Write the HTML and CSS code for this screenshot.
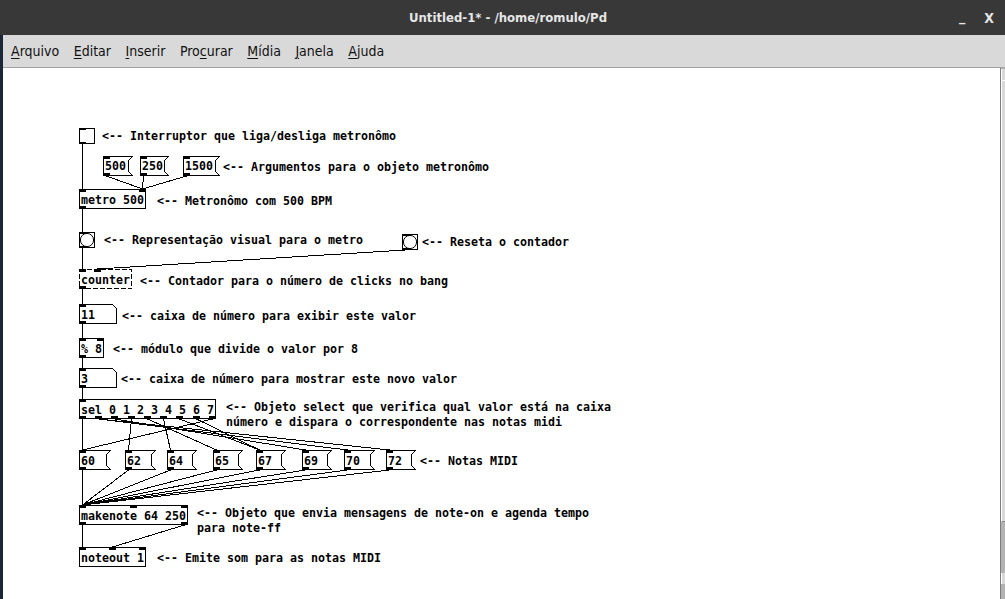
FILE: index.html
```html
<!DOCTYPE html>
<html lang="pt">
<head>
<meta charset="utf-8">
<title>Untitled-1* - /home/romulo/Pd</title>
<link rel="stylesheet" href="styles.css">
</head>
<body>
<div class="screen">
  <header class="titlebar">
    <div class="title">Untitled-1* - /home/romulo/Pd</div>
    <div class="controls"><span class="min">_</span><span class="close">X</span></div>
  </header>
  <div class="main">
    <div class="strip"></div>
    <div class="window">
      <nav class="menubar">
        <span class="mi"><u>A</u>rquivo</span>
        <span class="mi"><u>E</u>ditar</span>
        <span class="mi"><u>I</u>nserir</span>
        <span class="mi">Pro<u>c</u>urar</span>
        <span class="mi"><u>M</u>ídia</span>
        <span class="mi"><u>J</u>anela</span>
        <span class="mi"><u>A</u>juda</span>
      </nav>
      <div class="workspace">
        <div class="canvas">
          <svg class="patch" width="997" height="531" viewBox="3 68 997 531" xmlns="http://www.w3.org/2000/svg">
            <g class="cords">
              <line x1="82.5" y1="144" x2="82.5" y2="189"/>
              <line x1="106.5" y1="176" x2="142.5" y2="189"/>
              <line x1="143.5" y1="176" x2="142.5" y2="189"/>
              <line x1="186.5" y1="176" x2="142.5" y2="189"/>
              <line x1="82.5" y1="209" x2="82.5" y2="232"/>
              <line x1="82.5" y1="248" x2="82.5" y2="269"/>
              <line x1="405.5" y1="250" x2="97.5" y2="269"/>
              <line x1="82.5" y1="289" x2="82.5" y2="304"/>
              <line x1="82.5" y1="324" x2="82.5" y2="338"/>
              <line x1="82.5" y1="358" x2="82.5" y2="368"/>
              <line x1="82.5" y1="388" x2="82.5" y2="399"/>
              <line x1="82.5" y1="419" x2="82.5" y2="450"/>
              <line x1="98.5" y1="419" x2="347.5" y2="450"/>
              <line x1="98.5" y1="419" x2="389.5" y2="450"/>
              <line x1="114.5" y1="419" x2="305.5" y2="450"/>
              <line x1="131.5" y1="419" x2="128.5" y2="450"/>
              <line x1="147.5" y1="419" x2="216.5" y2="450"/>
              <line x1="163.5" y1="419" x2="170.5" y2="450"/>
              <line x1="179.5" y1="419" x2="259.5" y2="450"/>
              <line x1="196.5" y1="419" x2="259.5" y2="450"/>
              <line x1="212.5" y1="419" x2="82.5" y2="450"/>
              <line x1="82.5" y1="470" x2="82.5" y2="505"/>
              <line x1="128.5" y1="470" x2="82.5" y2="505"/>
              <line x1="170.5" y1="470" x2="82.5" y2="505"/>
              <line x1="216.5" y1="470" x2="82.5" y2="505"/>
              <line x1="259.5" y1="470" x2="82.5" y2="505"/>
              <line x1="305.5" y1="470" x2="82.5" y2="505"/>
              <line x1="347.5" y1="470" x2="82.5" y2="505"/>
              <line x1="389.5" y1="470" x2="82.5" y2="505"/>
              <line x1="82.5" y1="525" x2="82.5" y2="547"/>
              <line x1="184.5" y1="525" x2="112.5" y2="547"/>
            </g>

            <rect class="b" x="79.5" y="128.5" width="15" height="15"/>
            <rect class="io" x="79" y="128" width="7" height="2"/>
            <rect class="io" x="79" y="142" width="7" height="2"/>
            <text class="t" x="102" y="139.5">&lt;-- Interruptor que liga/desliga metronômo</text>

            <polygon class="b" points="103.5,156.5 132.5,156.5 128.5,160.5 128.5,171.5 132.5,175.5 103.5,175.5"/>
            <rect class="io" x="103" y="156" width="7" height="3"/>
            <rect class="io" x="103" y="173" width="7" height="3"/>
            <text class="t" x="105" y="170">500</text>

            <polygon class="b" points="140.5,156.5 168.5,156.5 164.5,160.5 164.5,171.5 168.5,175.5 140.5,175.5"/>
            <rect class="io" x="140" y="156" width="7" height="3"/>
            <rect class="io" x="140" y="173" width="7" height="3"/>
            <text class="t" x="142" y="170">250</text>

            <polygon class="b" points="183.5,156.5 219.5,156.5 215.5,160.5 215.5,171.5 219.5,175.5 183.5,175.5"/>
            <rect class="io" x="183" y="156" width="7" height="3"/>
            <rect class="io" x="183" y="173" width="7" height="3"/>
            <text class="t" x="185" y="170">1500</text>
            <text class="t" x="223" y="170.5">&lt;-- Argumentos para o objeto metronômo</text>

            <rect class="b" x="79.5" y="189.5" width="66" height="19"/>
            <rect class="io" x="79" y="189" width="7" height="3"/>
            <rect class="io" x="139" y="189" width="7" height="3"/>
            <rect class="io" x="79" y="206" width="7" height="3"/>
            <text class="t" x="81" y="204">metro 500</text>
            <text class="t" x="157" y="204.5">&lt;-- Metronômo com 500 BPM</text>

            <rect class="b" x="79.5" y="232.5" width="15" height="15"/>
            <circle class="b" cx="87" cy="240" r="6.6"/>
            <rect class="io" x="79" y="232" width="7" height="2"/>
            <rect class="io" x="79" y="246" width="7" height="2"/>
            <text class="t" x="104" y="243.5">&lt;-- Representação visual para o metro</text>

            <rect class="b" x="402.5" y="234.5" width="15" height="15"/>
            <circle class="b" cx="410" cy="242" r="6.6"/>
            <rect class="io" x="402" y="234" width="7" height="2"/>
            <rect class="io" x="402" y="248" width="7" height="2"/>
            <text class="t" x="422" y="245.5">&lt;-- Reseta o contador</text>

            <rect class="b dash" x="79.5" y="269.5" width="52" height="19"/>
            <rect class="io" x="79" y="269" width="7" height="3"/>
            <rect class="io" x="94" y="269" width="7" height="3"/>
            <rect class="io" x="79" y="286" width="7" height="3"/>
            <text class="t" x="81" y="284">counter</text>
            <text class="t" x="140" y="284.5">&lt;-- Contador para o número de clicks no bang</text>

            <polygon class="b" points="79.5,304.5 112.5,304.5 116.5,308.5 116.5,323.5 79.5,323.5"/>
            <rect class="io" x="79" y="304" width="7" height="3"/>
            <rect class="io" x="79" y="321" width="7" height="3"/>
            <text class="t" x="81" y="318.5">11</text>
            <text class="t" x="122" y="319.5">&lt;-- caixa de número para exibir este valor</text>

            <rect class="b" x="79.5" y="338.5" width="24" height="19"/>
            <rect class="io" x="79" y="338" width="7" height="3"/>
            <rect class="io" x="97" y="338" width="7" height="3"/>
            <rect class="io" x="79" y="355" width="7" height="3"/>
            <text class="t" x="81" y="352.5">% 8</text>
            <text class="t" x="113" y="352.5">&lt;-- módulo que divide o valor por 8</text>

            <polygon class="b" points="79.5,368.5 112.5,368.5 116.5,372.5 116.5,387.5 79.5,387.5"/>
            <rect class="io" x="79" y="368" width="7" height="3"/>
            <rect class="io" x="79" y="385" width="7" height="3"/>
            <text class="t" x="81" y="382.5">3</text>
            <text class="t" x="121" y="383">&lt;-- caixa de número para mostrar este novo valor</text>

            <rect class="b" x="79.5" y="399.5" width="136" height="19"/>
            <rect class="io" x="79" y="399" width="7" height="3"/>
            <rect class="io" x="79" y="416" width="7" height="3"/>
            <rect class="io" x="95" y="416" width="7" height="3"/>
            <rect class="io" x="111" y="416" width="7" height="3"/>
            <rect class="io" x="128" y="416" width="7" height="3"/>
            <rect class="io" x="144" y="416" width="7" height="3"/>
            <rect class="io" x="160" y="416" width="7" height="3"/>
            <rect class="io" x="176" y="416" width="7" height="3"/>
            <rect class="io" x="193" y="416" width="7" height="3"/>
            <rect class="io" x="209" y="416" width="7" height="3"/>
            <text class="t" x="81" y="413.5">sel 0 1 2 3 4 5 6 7</text>
            <text class="t" x="226" y="410.5">&lt;-- Objeto select que verifica qual valor está na caixa</text>
            <text class="t" x="226" y="425.5">número e dispara o correspondente nas notas midi</text>

            <g>
              <polygon class="b" points="79.5,450.5 110.5,450.5 106.5,454.5 106.5,465.5 110.5,469.5 79.5,469.5"/>
              <rect class="io" x="79" y="450" width="7" height="3"/><rect class="io" x="79" y="467" width="7" height="3"/>
              <text class="t" x="81" y="464.5">60</text>

              <polygon class="b" points="125.5,450.5 155.5,450.5 151.5,454.5 151.5,465.5 155.5,469.5 125.5,469.5"/>
              <rect class="io" x="125" y="450" width="7" height="3"/><rect class="io" x="125" y="467" width="7" height="3"/>
              <text class="t" x="127" y="464.5">62</text>

              <polygon class="b" points="167.5,450.5 196.5,450.5 192.5,454.5 192.5,465.5 196.5,469.5 167.5,469.5"/>
              <rect class="io" x="167" y="450" width="7" height="3"/><rect class="io" x="167" y="467" width="7" height="3"/>
              <text class="t" x="169" y="464.5">64</text>

              <polygon class="b" points="213.5,450.5 242.5,450.5 238.5,454.5 238.5,465.5 242.5,469.5 213.5,469.5"/>
              <rect class="io" x="213" y="450" width="7" height="3"/><rect class="io" x="213" y="467" width="7" height="3"/>
              <text class="t" x="215" y="464.5">65</text>

              <polygon class="b" points="256.5,450.5 285.5,450.5 281.5,454.5 281.5,465.5 285.5,469.5 256.5,469.5"/>
              <rect class="io" x="256" y="450" width="7" height="3"/><rect class="io" x="256" y="467" width="7" height="3"/>
              <text class="t" x="258" y="464.5">67</text>

              <polygon class="b" points="302.5,450.5 331.5,450.5 327.5,454.5 327.5,465.5 331.5,469.5 302.5,469.5"/>
              <rect class="io" x="302" y="450" width="7" height="3"/><rect class="io" x="302" y="467" width="7" height="3"/>
              <text class="t" x="304" y="464.5">69</text>

              <polygon class="b" points="344.5,450.5 374.5,450.5 370.5,454.5 370.5,465.5 374.5,469.5 344.5,469.5"/>
              <rect class="io" x="344" y="450" width="7" height="3"/><rect class="io" x="344" y="467" width="7" height="3"/>
              <text class="t" x="346" y="464.5">70</text>

              <polygon class="b" points="386.5,450.5 415.5,450.5 411.5,454.5 411.5,465.5 415.5,469.5 386.5,469.5"/>
              <rect class="io" x="386" y="450" width="7" height="3"/><rect class="io" x="386" y="467" width="7" height="3"/>
              <text class="t" x="388" y="464.5">72</text>
            </g>
            <text class="t" x="420" y="464.5">&lt;-- Notas MIDI</text>

            <rect class="b" x="79.5" y="505.5" width="108" height="19"/>
            <rect class="io" x="79" y="505" width="7" height="3"/>
            <rect class="io" x="130" y="505" width="7" height="3"/>
            <rect class="io" x="181" y="505" width="7" height="3"/>
            <rect class="io" x="79" y="522" width="7" height="3"/>
            <rect class="io" x="181" y="522" width="7" height="3"/>
            <text class="t" x="81" y="519.5">makenote 64 250</text>
            <text class="t" x="197" y="516.5">&lt;-- Objeto que envia mensagens de note-on e agenda tempo</text>
            <text class="t" x="197" y="531.5">para note-ff</text>

            <rect class="b" x="79.5" y="547.5" width="66" height="19"/>
            <rect class="io" x="79" y="547" width="7" height="3"/>
            <rect class="io" x="109" y="547" width="7" height="3"/>
            <rect class="io" x="139" y="547" width="7" height="3"/>
            <text class="t" x="81" y="561.5">noteout 1</text>
            <text class="t" x="157" y="561.5">&lt;-- Emite som para as notas MIDI</text>
          </svg>
        </div>
        <div class="vscroll">
          <div class="sb-arrow sb-up"></div>
          <div class="sb-thumb"></div>
          <div class="sb-trough"></div>
          <div class="sb-arrow sb-down"></div>
          <div class="sb-rest"></div>
        </div>
      </div>
    </div>
  </div>
</div>
</body>
</html>
```

FILE: styles.css
```css
* { box-sizing: border-box; }
html, body { margin: 0; padding: 0; }
body {
  width: 1005px;
  height: 599px;
  overflow: hidden;
  background: #1d2638;
}
.screen {
  width: 1005px;
  height: 599px;
  display: flex;
  flex-direction: column;
}
.titlebar {
  height: 35px;
  flex: 0 0 35px;
  background: #383838;
  display: grid;
  grid-template-columns: 1fr auto 1fr;
  align-items: center;
  color: #e6e6e6;
  font-family: "DejaVu Sans Condensed", "DejaVu Sans", sans-serif;
  font-stretch: condensed;
}
.title {
  grid-column: 2;
  padding-left: 11px;
  font-weight: bold;
  font-size: 13px;
}
.controls {
  grid-column: 3;
  justify-self: end;
  display: flex;
  align-items: center;
  gap: 19px;
  padding-right: 11px;
  font-size: 14px;
  font-weight: bold;
}
.min { position: relative; top: -2px; }
.main {
  flex: 1;
  display: flex;
  min-height: 0;
}
.strip {
  width: 3px;
  flex: 0 0 3px;
  background: #1d2638;
}
.window {
  flex: 1;
  display: flex;
  flex-direction: column;
  background: #ffffff;
}
.menubar {
  height: 33px;
  flex: 0 0 33px;
  background: #d9d9d9;
  border-bottom: 1px solid #a3a3a3;
  display: flex;
  align-items: center;
  gap: 14.5px;
  padding-left: 8px;
  font-family: "DejaVu Sans Condensed", "DejaVu Sans", sans-serif;
  font-stretch: condensed;
  font-size: 14px;
  color: #111;
}
.mi u {
  text-decoration: underline;
  text-underline-offset: 2px;
}
.workspace {
  flex: 1;
  display: flex;
  min-height: 0;
}
.canvas {
  flex: 1;
  position: relative;
  background: #ffffff;
  overflow: hidden;
}
.patch {
  display: block;
}
.cords line {
  stroke: #000;
  stroke-width: 1;
  shape-rendering: crispEdges;
}
.b {
  fill: none;
  stroke: #000;
  stroke-width: 1;
  shape-rendering: crispEdges;
}
circle.b { shape-rendering: auto; }
.dash { stroke-dasharray: 5 2; }
.io {
  fill: #000;
  shape-rendering: crispEdges;
}
.t {
  font-family: "DejaVu Sans Mono", monospace;
  font-weight: bold;
  font-size: 11.63px;
  fill: #000;
}
.vscroll {
  width: 5px;
  flex: 0 0 5px;
  border-left: 1px solid #7d7d7d;
  display: flex;
  flex-direction: column;
  background: #b3b3b3;
}
.sb-arrow {
  height: 11px;
  flex: 0 0 11px;
  background: #d9d9d9;
  border-left: 1px solid #ffffff;
}
.sb-up { margin-top: 1px; }
.sb-thumb {
  flex: 0 0 442px;
  background: #d9d9d9;
  border-left: 1px solid #ffffff;
  border-top: 1px solid #ffffff;
  border-bottom: 1px solid #8a8a8a;
}
.sb-trough {
  flex: 0 0 51px;
  background: #b3b3b3;
}
.sb-rest {
  flex: 1;
  background: #b3b3b3;
}
```
